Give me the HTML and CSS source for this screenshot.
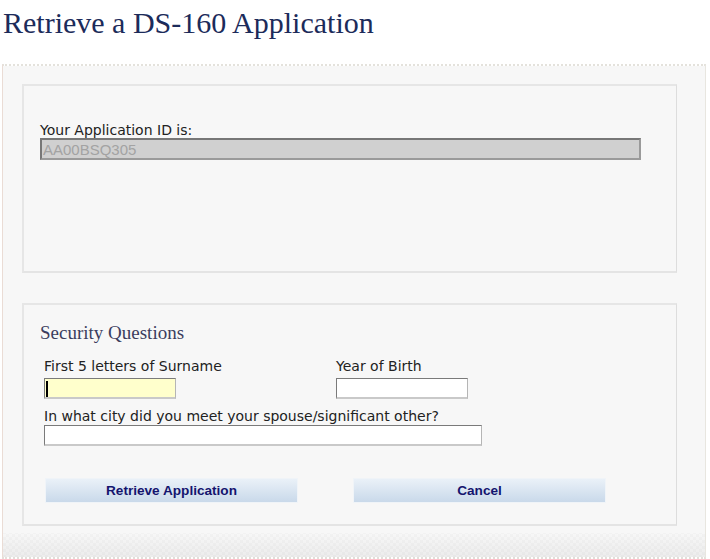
FILE: index.html
```html
<!DOCTYPE html>
<html>
<head>
<meta charset="utf-8">
<link rel="stylesheet" href="styles.css">
</head>
<body>
<h1 class="title">Retrieve a DS-160 Application</h1>
<div class="panel">
  <div class="box box-id">
    <label class="lbl">Your Application ID is:</label>
    <input class="id-input" type="text" value="AA00BSQ305" disabled>
  </div>
  <div class="box box-sec">
    <h2 class="sec-title">Security Questions</h2>
    <div class="row">
      <div class="field field-surname">
        <label class="lbl">First 5 letters of Surname</label>
        <span class="input-wrap">
          <input class="txt txt-focus" type="text">
          <span class="caret"></span>
        </span>
      </div>
      <div class="field field-year">
        <label class="lbl">Year of Birth</label>
        <input class="txt" type="text">
      </div>
    </div>
    <div class="field field-city">
      <label class="lbl">In what city did you meet your spouse/significant other?</label>
      <input class="txt txt-wide" type="text">
    </div>
    <div class="buttons">
      <button class="btn">Retrieve Application</button>
      <button class="btn">Cancel</button>
    </div>
  </div>
</div>
</body>
</html>
```

FILE: styles.css
```css
html, body {
  margin: 0;
  padding: 0;
  background: #ffffff;
}
body {
  width: 710px;
  height: 559px;
  overflow: hidden;
}
.title {
  margin: 0;
  padding: 6px 0 0 3px;
  height: 58px;
  font-family: "Liberation Serif", "Times New Roman", serif;
  font-weight: normal;
  font-size: 30px;
  line-height: 34px;
  color: #1c2b5a;
}
.panel {
  margin: 0 4px 0 2px;
  height: 495px;
  box-sizing: border-box;
  background-color: #f7f7f7;
  background-image:
    repeating-conic-gradient(rgba(0,0,0,0.02) 0 25%, rgba(0,0,0,0) 0 50%),
    linear-gradient(to bottom, #f7f7f7 0, #f7f7f7 calc(100% - 24px), #ececec 100%);
  background-size: 6px 6px, 100% 100%;
  background-repeat: repeat, no-repeat;
  background-clip: padding-box;
  border-top: 2px dotted #e4e2dc;
  border-left: 1px solid #eadcd5;
  border-right: 1px solid #e8e6e0;
  border-bottom: 2px dotted #e2e0da;
  padding: 18px 28px 0 19px;
  position: relative;
}
.panel::before {
  content: "";
  position: absolute;
  left: 0;
  right: 0;
  top: 0;
  bottom: 24px;
  background: #f7f7f7;
}
.box {
  position: relative;
  background: #f7f7f7;
  border-top: 2px solid #e6e6e6;
  border-left: 2px solid #e6e6e6;
  border-right: 1px solid #dddddd;
  border-bottom: 2px solid #e4e4e4;
}
.box-id {
  height: 189px;
  padding: 36px 0 0 16px;
  box-sizing: border-box;
  display: flex;
  flex-direction: column;
  align-items: flex-start;
}
.box-id .lbl {
  line-height: 16px;
}
.lbl {
  font-family: "DejaVu Sans", Verdana, sans-serif;
  font-size: 14px;
  color: #222222;
  line-height: 17px;
  display: block;
}
.id-input {
  margin: 0;
  width: 601px;
  height: 22px;
  box-sizing: border-box;
  background: #d0d0d0;
  border-top: 2px solid #777777;
  border-left: 2px solid #777777;
  border-right: 2px solid #9a9a9a;
  border-bottom: 2px solid #9a9a9a;
  padding: 0 1px;
  font-family: "Liberation Sans", Arial, sans-serif;
  font-size: 15px;
  color: #a3a3a3;
}
.box-sec {
  margin-top: 30px;
  height: 223px;
  box-sizing: border-box;
  padding: 17px 0 0 16px;
}
.sec-title {
  margin: 0 0 14px 0;
  font-family: "Liberation Serif", "Times New Roman", serif;
  font-weight: normal;
  font-size: 19px;
  line-height: 22px;
  color: #3b3d5e;
}
.row {
  display: flex;
  padding-left: 4px;
}
.field-surname {
  width: 292px;
}
.field {
  display: flex;
  flex-direction: column;
  align-items: flex-start;
}
.field .lbl {
  margin-bottom: 3px;
}
.field-city {
  padding-left: 4px;
  margin-top: 9px;
}
.field-city .lbl {
  margin-bottom: 0;
}
.input-wrap {
  position: relative;
  display: block;
}
.txt {
  margin: 0;
  width: 132px;
  height: 21px;
  box-sizing: border-box;
  background: #ffffff;
  border-top: 1px solid #7a7a7a;
  border-left: 1px solid #7a7a7a;
  border-right: 1px solid #b5b5b5;
  border-bottom: 2px solid #c9c9c9;
  padding: 0 2px;
  font-family: "DejaVu Sans", Verdana, sans-serif;
  font-size: 12px;
}
.txt-focus {
  background: #ffffcc;
}
.txt-wide {
  width: 438px;
  height: 21px;
}
.caret {
  position: absolute;
  left: 2px;
  top: 3px;
  width: 2px;
  height: 16px;
  background: #000000;
}
.buttons {
  display: flex;
  gap: 55px;
  margin-top: 32px;
  padding-left: 5px;
}
.btn {
  width: 253px;
  height: 25px;
  margin: 0;
  padding: 0;
  border: 1px solid #f0f4f8;
  background: linear-gradient(#eaf1f8, #c9d9ea);
  font-family: "Liberation Sans", Arial, sans-serif;
  font-weight: bold;
  font-size: 13.6px;
  color: #14146e;
  cursor: pointer;
}
```
